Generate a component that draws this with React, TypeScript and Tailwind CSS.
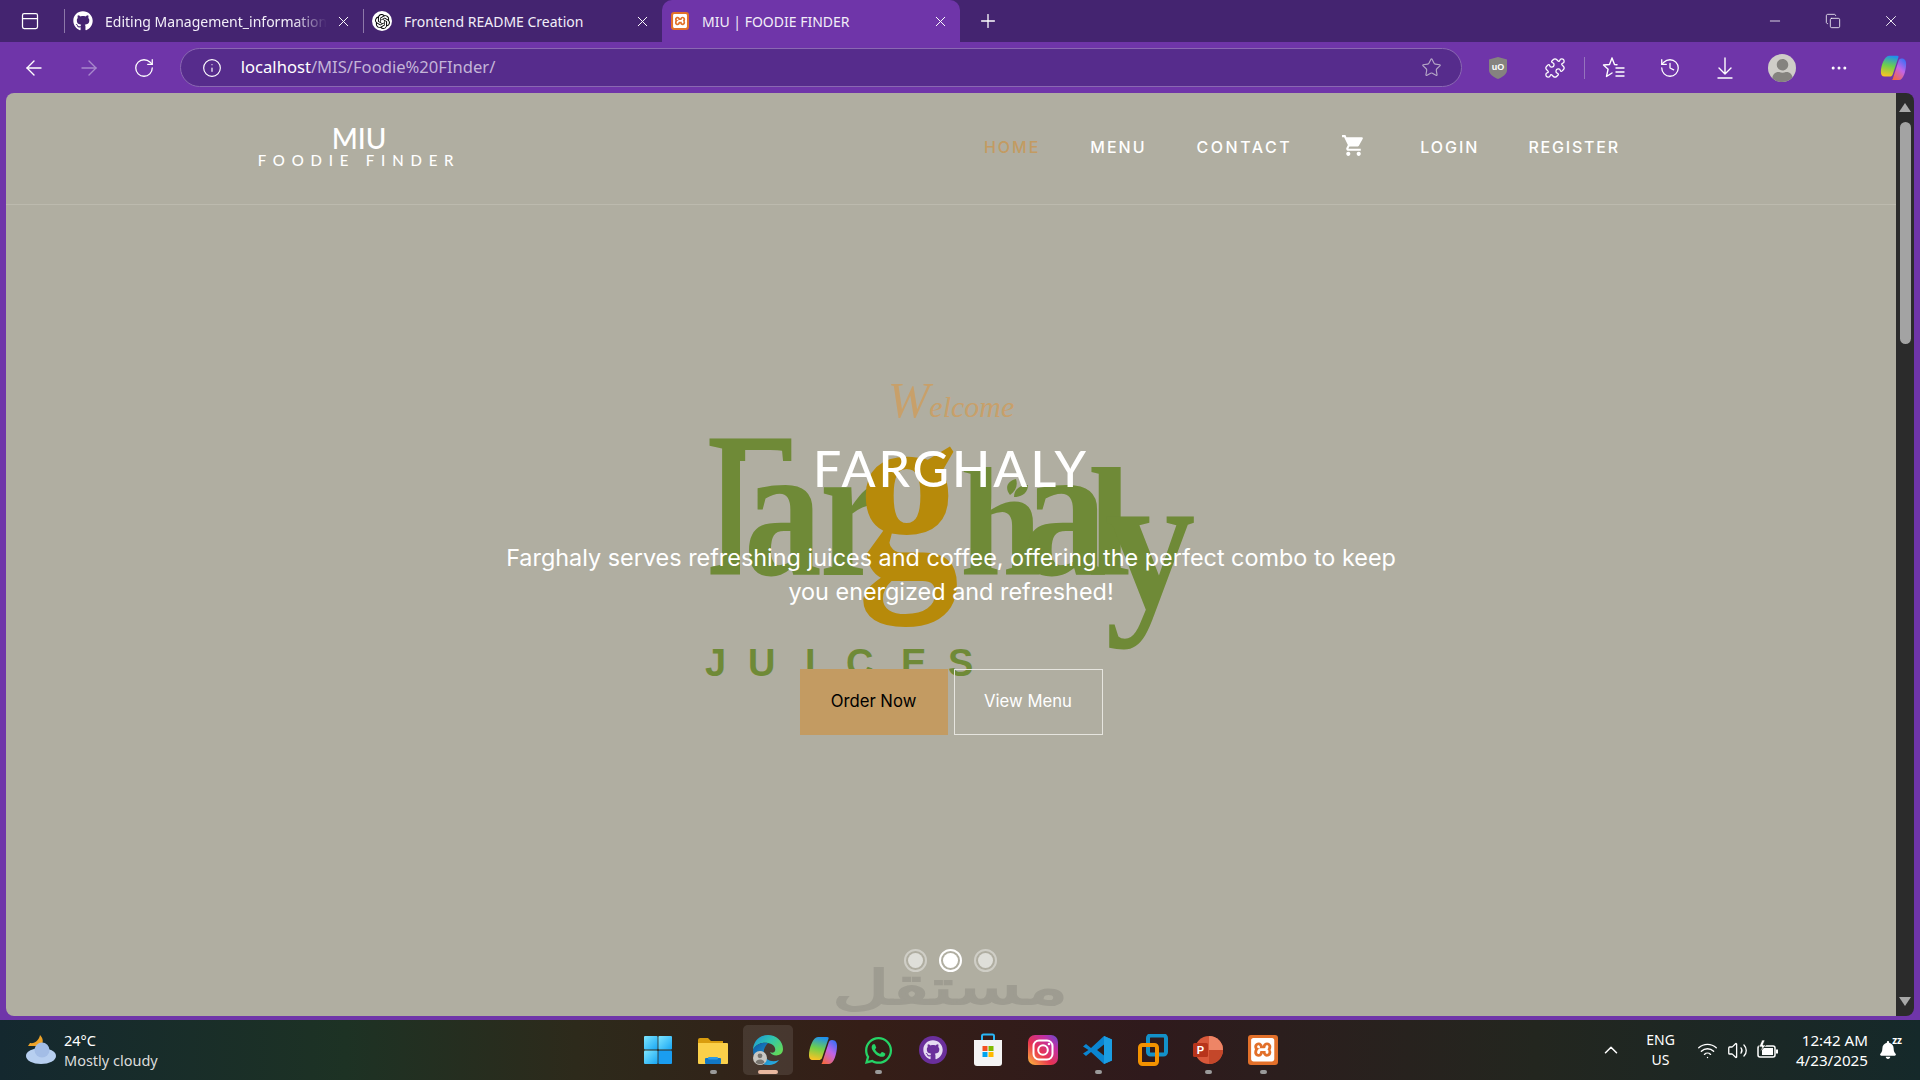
import React from "react";
import { ArrowLeft, ArrowRight, RotateCw, Info, Star, Puzzle, History, MoreHorizontal, Plus, X, Minus, ChevronUp, Wifi, Volume2, PanelTop, Copy } from "lucide-react";
import { FaGithub, FaWhatsapp, FaBell, FaUser } from "react-icons/fa";
import { SiOpenai, SiXampp } from "react-icons/si";
import { MdShoppingCart } from "react-icons/md";

const ui = "font-['Noto_Sans','Open_Sans',sans-serif]";

function XamppTile({ size }: { size: number }) {
  return (
    <span className="flex items-center justify-center rounded-[3px] bg-[#e2702a] text-white" style={{ width: size, height: size }}>
      <SiXampp size={size * 0.78} />
    </span>
  );
}

function Tab({ icon, title, active, fade, w }: { icon: React.ReactNode; title: string; active?: boolean; fade?: boolean; w: number }) {
  return (
    <div className={`relative flex h-[42px] items-center pl-[7px] pr-[11px] ${active ? "rounded-t-[10px] bg-[#6f35a9]" : ""}`} style={{ width: w }}>
      <span className="flex w-[22px] items-center justify-center">{icon}</span>
      <span className={`ml-[11px] w-[222px] overflow-hidden whitespace-nowrap text-[14px] text-[#f2eef8] ${fade ? "[mask-image:linear-gradient(90deg,#000_85%,transparent_100%)]" : ""}`}>{title}</span>
      <X size={17} strokeWidth={1.4} className="ml-auto text-white" />
    </div>
  );
}

function ToolBtn({ children, w = 55 }: { children: React.ReactNode; w?: number }) {
  return <span className="flex h-[51px] items-center justify-center text-white" style={{ width: w }}>{children}</span>;
}

function Win11() {
  return (
    <svg width="30" height="30" viewBox="0 0 30 30">
      <defs>
        <linearGradient id="w1" x1="0" y1="0" x2="1" y2="1"><stop offset="0" stopColor="#7ee6ff" /><stop offset="1" stopColor="#18a6f4" /></linearGradient>
      </defs>
      <rect x="1" y="1" width="13.6" height="13.6" rx="1" fill="url(#w1)" />
      <rect x="15.4" y="1" width="13.6" height="13.6" rx="1" fill="url(#w1)" />
      <rect x="1" y="15.4" width="13.6" height="13.6" rx="1" fill="url(#w1)" />
      <rect x="15.4" y="15.4" width="13.6" height="13.6" rx="1" fill="#1a9df0" />
    </svg>
  );
}
function Folder() {
  return (
    <svg width="32" height="32" viewBox="0 0 32 32">
      <path d="M1 6a2 2 0 0 1 2-2h8l3 3h12v4H1z" fill="#d99c0e" />
      <path d="M1 9h29a1 1 0 0 1 1 1v19a1 1 0 0 1-1 1H2a1 1 0 0 1-1-1z" fill="#fbd04a" />
      <rect x="8" y="24" width="16" height="6" rx="1" fill="#1277c4" />
      <rect x="11" y="23" width="10" height="2.4" rx="1" fill="#2a9be6" />
    </svg>
  );
}
function Edge() {
  return (
    <svg width="30" height="30" viewBox="0 0 30 30">
      <defs>
        <linearGradient id="e1" x1="0" y1="0" x2="1" y2="0.7"><stop offset="0" stopColor="#1b8fdc" /><stop offset="0.5" stopColor="#2fc4b0" /><stop offset="1" stopColor="#62d85a" /></linearGradient>
        <linearGradient id="e2" x1="0" y1="0" x2="1" y2="1"><stop offset="0" stopColor="#0c59a4" /><stop offset="1" stopColor="#2bb5e8" /></linearGradient>
      </defs>
      <path d="M15 0C6 0 0 7 0 15c3-6 9-8 15-7 6 1 8 5 7 8-1 2-3 2-5 1 2 5 13 5 13-3C30 6 23 0 15 0z" fill="url(#e1)" />
      <path d="M0 15c0 9 7 15 15 15 5 0 9-2 11-5-7 3-14 0-15-6-1-4 1-8 4-11C8 7 2 10 0 15z" fill="url(#e2)" />
      <circle cx="7" cy="23" r="7" fill="#c9c7c2" />
      <circle cx="7" cy="20.800" r="2.400" fill="#77746f" />
      <path d="M2.500 27.500c1-4 8-4 9 0a7 7 0 0 1-9 0z" fill="#77746f" />
    </svg>
  );
}
function Copilot({ size = 30, uid = "c" }: { size?: number; uid?: string }) {
  return (
    <svg width={size} height={size} viewBox="0 0 30 30">
      <defs>
        <linearGradient id={`${uid}a`} x1="0.6" y1="0" x2="0.4" y2="1"><stop offset="0" stopColor="#1f8fef" /><stop offset="0.5" stopColor="#6fd04a" /><stop offset="1" stopColor="#f7c325" /></linearGradient>
        <linearGradient id={`${uid}b`} x1="0.8" y1="0" x2="0.2" y2="1"><stop offset="0" stopColor="#3b6ff5" /><stop offset="0.45" stopColor="#c264e8" /><stop offset="1" stopColor="#f5683f" /></linearGradient>
      </defs>
      <path d="M10 2h9c2 0 2 1 1 3L14 23c-.6 1.500-2 2-3 2H5c-3 0-4-2-4-5 0-7 4-18 9-18z" fill={`url(#${uid}a)`} />
      <path d="M13 29h8c5 0 8-11 8-18 0-3-1-6-5-6-2 0-3 1-3.500 3L15 25c-.5 2-1 4-2 4z" fill={`url(#${uid}b)`} />
    </svg>
  );
}
function Store() {
  return (
    <svg width="30" height="34" viewBox="0 0 30 34">
      <path d="M9 8V3a1.500 1.500 0 0 1 1.500-1.500h9A1.500 1.500 0 0 1 21 3v5" fill="none" stroke="#29b6f6" strokeWidth="2" />
      <path d="M1 7h28v23a3 3 0 0 1-3 3H4a3 3 0 0 1-3-3z" fill="#f4f4f4" />
      <rect x="9.500" y="13" width="5" height="5" fill="#f25022" />
      <rect x="15.500" y="13" width="5" height="5" fill="#7fba00" />
      <rect x="9.500" y="19" width="5" height="5" fill="#00a4ef" />
      <rect x="15.500" y="19" width="5" height="5" fill="#ffb900" />
    </svg>
  );
}
function Insta() {
  return (
    <svg width="30" height="30" viewBox="0 0 30 30">
      <defs>
        <linearGradient id="ig" x1="0" y1="1" x2="1" y2="0"><stop offset="0" stopColor="#fdc13c" /><stop offset="0.4" stopColor="#e8344f" /><stop offset="0.75" stopColor="#c12fa5" /><stop offset="1" stopColor="#5a4fd0" /></linearGradient>
      </defs>
      <rect width="30" height="30" rx="7" fill="url(#ig)" />
      <rect x="5.500" y="5.500" width="19" height="19" rx="5.500" fill="none" stroke="#fff" strokeWidth="2" />
      <circle cx="15" cy="15" r="4.800" fill="none" stroke="#fff" strokeWidth="2" />
      <circle cx="21" cy="9" r="1.300" fill="#fff" />
    </svg>
  );
}
function VsCode() {
  return (
    <svg width="30" height="30" viewBox="0 0 30 30">
      <path d="M21 1l8 3.500v21L21 29 8 17l-5 4-3-2.500L5.500 15 0 11.500 3 9l5 4z" fill="#0a85d1" />
      <path d="M21 1l8 3.500v21L21 29V20l-7-5 7-5z" fill="#1b9de2" />
      <path d="M21 9.500V20.500L14 15z" fill="#2e1c1a" />
    </svg>
  );
}
function VMware() {
  return (
    <svg width="30" height="32" viewBox="0 0 30 32">
      <rect x="10" y="1.500" width="18" height="19" rx="2.500" fill="none" stroke="#1391c9" strokeWidth="4" />
      <rect x="2" y="11" width="17" height="19" rx="2.500" fill="none" stroke="#f39200" strokeWidth="4" />
    </svg>
  );
}
function Ppt() {
  return (
    <svg width="30" height="30" viewBox="0 0 30 30">
      <circle cx="16" cy="15" r="14" fill="#d9583a" />
      <path d="M16 1a14 14 0 0 1 14 14H16z" fill="#ee8566" />
      <path d="M16 15h14a14 14 0 0 1-14 14z" fill="#c4472a" />
      <rect x="0" y="8" width="15" height="14" rx="1.500" fill="#b7341b" />
      <text x="7.500" y="19" textAnchor="middle" fontFamily="Liberation Sans, sans-serif" fontSize="11" fontWeight="700" fill="#fff">P</text>
    </svg>
  );
}

function TaskIcon({ children, dot, active }: { children: React.ReactNode; dot?: boolean; active?: boolean }) {
  return (
    <div className={`relative flex h-[50px] w-[50px] items-center justify-center rounded-[5px] ${active ? "bg-white/10" : ""}`}>
      {children}
      {dot && <span className={`absolute bottom-[1px] h-[4px] rounded-full ${active ? "w-[20px] bg-[#e9b8a0]" : "w-[7px] bg-[#9a9a9a]"}`} />}
    </div>
  );
}

function Browser() {
  return (
    <>
      <div className="flex h-[42px] items-center bg-[#442470]">
        <span className="flex w-[60px] items-center justify-center text-white"><PanelTop size={20} strokeWidth={1.5} /></span>
        <span className="ml-[4px] h-[24px] w-px bg-[#8d78a9]" />
        <Tab icon={<FaGithub size={20} className="text-white" />} title="Editing Management_information_" fade w={298} />
        <span className="h-[24px] w-px bg-[#8d78a9]" />
        <Tab icon={<span className="flex h-[20px] w-[20px] items-center justify-center rounded-full bg-white text-black"><SiOpenai size={15} /></span>} title="Frontend README Creation" w={298} />
        <Tab icon={<XamppTile size={18} />} title="MIU | FOODIE FINDER" active w={298} />
        <span className="ml-[17px] text-white"><Plus size={22} strokeWidth={1.4} /></span>
        <div className="ml-auto flex items-center text-white">
          <span className="flex w-[58px] justify-center"><Minus size={16} strokeWidth={1.2} /></span>
          <span className="flex w-[58px] justify-center"><Copy size={16} strokeWidth={1.2} /></span>
          <span className="flex w-[58px] justify-center"><X size={18} strokeWidth={1.2} /></span>
        </div>
      </div>
      <div className="flex h-[51px] items-center bg-[#6f35a9] pl-[7px]">
        <ToolBtn><ArrowLeft size={24} strokeWidth={1.4} /></ToolBtn>
        <ToolBtn><ArrowRight size={24} strokeWidth={1.4} className="text-[#a888cc]" /></ToolBtn>
        <ToolBtn><RotateCw size={22} strokeWidth={1.4} /></ToolBtn>
        <div className="ml-[8px] flex h-[39px] w-[1284px] items-center rounded-full border border-[#8a68b2] bg-[#562c8c] pl-[21px] pr-[19px]">
          <Info size={20} strokeWidth={1.4} className="text-white" />
          <span className="ml-[19px] text-[16.600px] text-white">localhost<span className="text-[#c4b5d8]">/MIS/Foodie%20FInder/</span></span>
          <Star size={21} strokeWidth={1.3} className="ml-auto text-[#b5a7c6]" />
        </div>
        <div className="ml-[8px] flex items-center">
          <ToolBtn>
            <svg width="18" height="22" viewBox="0 0 18 22"><path d="M9 0l9 2.500V13c0 4-4 7-9 9-5-2-9-5-9-9V2.500z" fill="#85837f" /><text x="9" y="13" textAnchor="middle" fontFamily="Liberation Sans, sans-serif" fontSize="9" fontWeight="700" fill="#fff">uO</text></svg>
          </ToolBtn>
          <ToolBtn w={59}><Puzzle size={22} strokeWidth={1.4} /></ToolBtn>
          <span className="h-[22px] w-px bg-[#9574bd]" />
          <ToolBtn w={58}>
            <svg width="24" height="24" viewBox="0 0 24 24" fill="none" stroke="currentColor" strokeWidth="1.400" strokeLinejoin="round" strokeLinecap="round"><path d="M10 2l2.500 6.500 2.500.2M10 2L7.500 8.500 1.500 9l4.600 4.200L4.500 20.500 10 17" /><path d="M14 12h8M14 16h8M14 20h8" /></svg>
          </ToolBtn>
          <ToolBtn w={54}><History size={22} strokeWidth={1.4} /></ToolBtn>
          <ToolBtn>
            <svg width="20" height="24" viewBox="0 0 20 24" fill="none" stroke="currentColor" strokeWidth="1.400" strokeLinecap="round" strokeLinejoin="round"><path d="M10 2v16M4 12l6 6 6-6M3 22h14" /></svg>
          </ToolBtn>
          <ToolBtn w={60}>
            <span className="flex h-[28px] w-[28px] items-end justify-center overflow-hidden rounded-full bg-[#cfcdc8] text-[#85837f]"><FaUser size={23} /></span>
          </ToolBtn>
          <ToolBtn w={54}><MoreHorizontal size={20} strokeWidth={1.6} /></ToolBtn>
          <ToolBtn w={54}><Copilot size={27} uid="t" /></ToolBtn>
        </div>
      </div>
    </>
  );
}

function Logo() {
  const s = { fontFamily: "'Liberation Serif', serif", fontWeight: 700 } as const;
  const g = "#6f8a37";
  // screen origin of this drawing is (700, 433)
  return (
    <svg className="absolute left-[694px] top-[228px]" width="510" height="460" viewBox="0 0 510 460">
      <defs>
        <clipPath id="fclip">
          <rect x="0" y="0" width="110" height="28" />
          <rect x="0" y="0" width="40" height="150" />
        </clipPath>
      </defs>
      <g clipPath="url(#fclip)">
        <text transform="translate(7,142) scale(0.72,1)" fontSize="208" fill={g} style={s}>F</text>
      </g>
      <text transform="translate(44,142) scale(0.82,1)" fontSize="190" fill={g} style={s}>a</text>
      <text transform="translate(120,142) scale(0.75,1)" fontSize="190" fill={g} style={s}>r</text>
      <text transform="translate(260,142) scale(0.95,1)" fontSize="155" fill={g} style={s}>h</text>
      <text transform="translate(322,142) scale(0.9,1)" fontSize="190" fill={g} style={s}>a</text>
      <text transform="translate(388,142) scale(1,1)" fontSize="155" fill={g} style={s}>l</text>
      <text transform="translate(405,174) scale(0.92,1)" fontSize="197" fill={g} style={s}>y</text>
      <text transform="translate(158,140) scale(0.82,1)" fontSize="246" fill="#b78a0a" style={s}>g</text>
      <path d="M310 62c-6-8-2-14 6-16 2 6 0 12-6 16zm4 2c0-8 6-12 14-12 0 8-6 12-14 12z" fill={g} />
      <g fontFamily="Liberation Sans, sans-serif" fontSize="38" fontWeight="700" fill={g}>
        <text x="5" y="243">J</text>
        <text x="48" y="243">U</text>
        <text x="105" y="243">I</text>
        <text x="146" y="243">C</text>
        <text x="201" y="243">E</text>
        <text x="248" y="243">S</text>
      </g>
    </svg>
  );
}

function Page() {
  const nav = "text-[16px] font-medium";
  return (
    <div className="flex h-[923px]">
      <div className="ml-[6px] flex w-[1890px] flex-col overflow-hidden rounded-l-[8px] bg-[#b0aea1] font-['Inter',sans-serif]">
        <div className="flex h-[112px] shrink-0 items-center justify-between border-b border-[#bcbaae] pb-[3px] pl-[250px] pr-[276px] text-white">
          <div className="-mt-[4px] flex w-[206px] flex-col items-center whitespace-nowrap font-['Lato',sans-serif]">
            <span className="text-[28px] font-medium leading-[30px]">MIU</span>
            <span className="text-[15px] font-medium leading-[14px] tracking-[6.800px]">FOODIE FINDER</span>
          </div>
          <div className="flex items-center">
            <span className={`${nav} tracking-[2px] text-[#c39b62]`}>HOME</span>
            <span className={`${nav} ml-[50px] tracking-[2px]`}>MENU</span>
            <span className={`${nav} ml-[50px] tracking-[2.500px]`}>CONTACT</span>
            <MdShoppingCart size={25} className="-mt-[4px] ml-[49px]" />
            <span className={`${nav} ml-[54px] tracking-[2px]`}>LOGIN</span>
            <span className={`${nav} ml-[49px] tracking-[1.800px]`}>REGISTER</span>
          </div>
        </div>
        <div className="relative flex flex-1 flex-col items-center overflow-hidden pt-[173px]">
          <Logo />
          <span className="absolute left-[826px] top-[759px] origin-top scale-y-[0.6] font-['DejaVu_Sans',sans-serif] text-[79px] leading-none text-[#9e9c91] [-webkit-text-stroke:3px_#9e9c91]">مستقل</span>
          <span className="relative flex h-[44px] items-baseline font-['Liberation_Serif',serif] italic leading-[44px] text-[#c8a06a]">
            <span className="text-[50px]">W</span>
            <span className="text-[30px]">elcome</span>
          </span>
          <h1 className="relative mt-[16px] font-['Lato',sans-serif] text-[50px] font-medium leading-[60px] tracking-[3px] text-white">FARGHALY</h1>
          <p className="relative mt-[43px] w-[900px] text-center text-[23.400px] leading-[34px] text-white">Farghaly serves refreshing juices and coffee, offering the perfect combo to keep you energized and refreshed!</p>
          <div className="relative mt-[60px] flex gap-[6px] text-[16.700px]">
            <span className="flex h-[66px] w-[148px] items-center justify-center bg-[#c39b62] text-black">Order Now</span>
            <span className="flex h-[66px] w-[149px] items-center justify-center border border-[#e6e5df] text-white">View Menu</span>
          </div>
          <div className="absolute left-[898px] top-[744px] flex gap-[12px]">
            {[false, true, false].map((on, i) => (
              <span key={i} className={`flex h-[23px] w-[23px] items-center justify-center rounded-full border-2 ${on ? "border-white" : "border-white/40"}`}>
                <span className={`h-[15px] w-[15px] rounded-full ${on ? "bg-white" : "bg-white/60"}`} />
              </span>
            ))}
          </div>
        </div>
      </div>
      <div className="flex w-[18px] flex-col items-center rounded-r-[8px] bg-[#2b2b2b] pt-[10px]">
        <span className="h-0 w-0 border-x-[6px] border-b-[9px] border-x-transparent border-b-[#a8a8a8]" />
        <span className="mt-[10px] h-[222px] w-[11px] rounded-full bg-[#a3a3a3]" />
        <span className="mb-[10px] mt-auto h-0 w-0 border-x-[6px] border-t-[9px] border-x-transparent border-t-[#a8a8a8]" />
      </div>
    </div>
  );
}

function Taskbar() {
  return (
    <div className="mt-[4px] grid h-[60px] grid-cols-[1fr_auto_1fr] items-center bg-[linear-gradient(90deg,#14282f_0%,#1d3224_18%,#2d2a1b_30%,#351e17_45%,#2f1a1c_60%,#23261f_80%,#15292a_100%)] text-white">
      <div className="flex items-center pl-[25px]">
        <svg width="32" height="32" viewBox="0 0 32 32">
          <path d="M15 1c3 3 4 7 1 11H3l2-3c5 1 9-3 10-8z" fill="#eea329" />
          <ellipse cx="16" cy="22" rx="15" ry="8" fill="#b7cff0" />
          <circle cx="17" cy="16" r="7.500" fill="#a3bde6" />
        </svg>
        <div className="ml-[7px] text-[14.500px] leading-[20px]">
          <div>24°C</div>
          <div className="text-[#dcdcdc]">Mostly cloudy</div>
        </div>
      </div>
      <div className="flex items-center gap-[5px] pl-[1px]">
        <TaskIcon><Win11 /></TaskIcon>
        <TaskIcon dot><Folder /></TaskIcon>
        <TaskIcon dot active><Edge /></TaskIcon>
        <TaskIcon><Copilot /></TaskIcon>
        <TaskIcon dot><FaWhatsapp size={31} className="text-[#25d366]" /></TaskIcon>
        <TaskIcon>
          <span className="flex h-[28px] w-[28px] items-center justify-center rounded-full bg-[#6a2f9b] text-[#e6dcf2]"><FaGithub size={20} /></span>
        </TaskIcon>
        <TaskIcon><Store /></TaskIcon>
        <TaskIcon><Insta /></TaskIcon>
        <TaskIcon dot><VsCode /></TaskIcon>
        <TaskIcon><VMware /></TaskIcon>
        <TaskIcon dot><Ppt /></TaskIcon>
        <TaskIcon dot><XamppTile size={30} /></TaskIcon>
      </div>
      <div className="flex items-center justify-end pr-[23px]">
        <ChevronUp size={22} strokeWidth={1.7} className="mr-[24px]" />
        <div className="mr-[22px] text-center text-[14px] leading-[20px]"><div>ENG</div><div>US</div></div>
        <Wifi size={21} strokeWidth={1.6} className="mr-[9px]" />
        <Volume2 size={21} strokeWidth={1.5} className="mr-[9px]" />
        <svg width="22" height="20" viewBox="0 0 22 20" className="mr-[17px]"><rect x="1" y="6" width="17" height="11" rx="2" fill="none" stroke="#fff" strokeWidth="1.500" /><rect x="5" y="8" width="11" height="7" fill="#fff" /><rect x="19" y="9.500" width="2" height="4" fill="#fff" /><path d="M5 0l-3 7h3l-2 5 6-7H6l2-5z" fill="#fff" stroke="#1f2a24" strokeWidth="0.700" /></svg>
        <div className="text-right text-[15.200px] leading-[20px]"><div>12:42 AM</div><div>4/23/2025</div></div>
        <span className="relative ml-[11px] flex"><FaBell size={18} /><span className="absolute -right-[5px] -top-[6px] text-[10px] font-bold leading-none">zz</span></span>
      </div>
    </div>
  );
}

export default function App() {
  return (
    <div className={`h-[1080px] w-[1920px] overflow-hidden bg-[#6f35a9] ${ui}`}>
      <Browser />
      <Page />
      <Taskbar />
    </div>
  );
}
